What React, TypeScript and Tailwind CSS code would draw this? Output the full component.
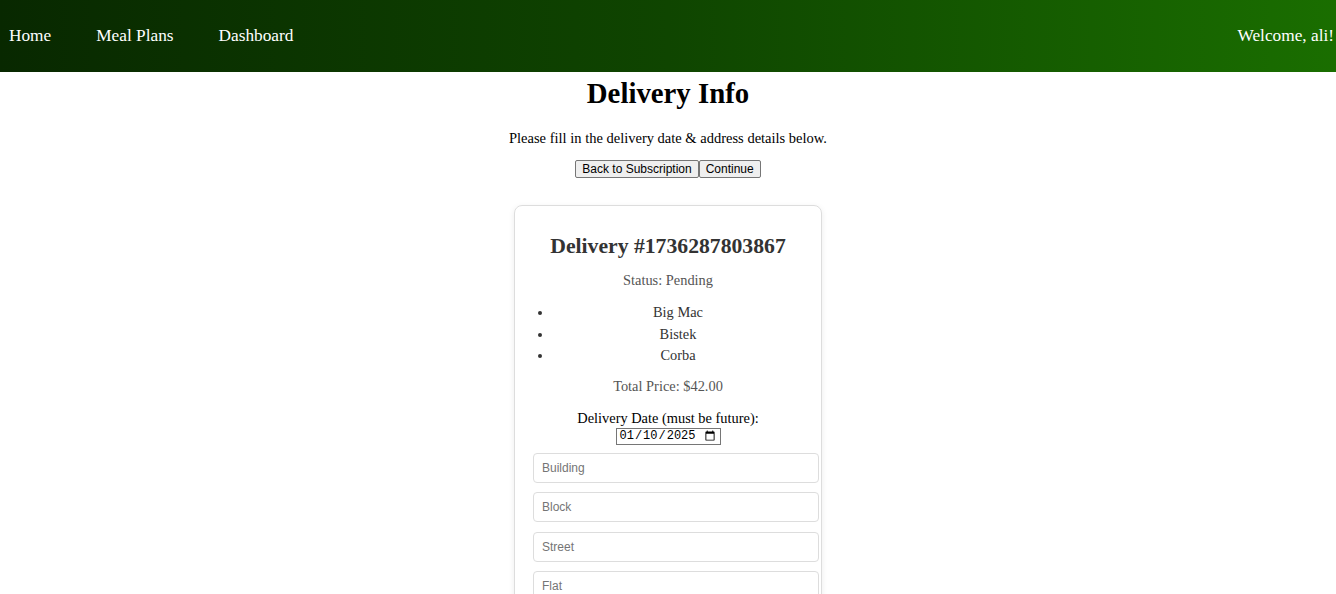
import React from "react";

export default function App() {
  const serif = { fontFamily: '"Liberation Serif", "Times New Roman", serif' };
  return (
    <div className="min-h-[594px] bg-white text-black" style={serif}>
      <nav className="h-[72px] flex items-center justify-between bg-[linear-gradient(to_right,#082800,#0f4500_50%,#1a6e00)] text-white text-[17.3px]">
        <div className="flex items-center gap-[45px] pl-[9px] pb-[1px]">
          <span>Home</span>
          <span>Meal Plans</span>
          <span>Dashboard</span>
        </div>
        <div className="pr-[2px] pb-[1px]">Welcome, ali!</div>
      </nav>

      <div className="flex flex-col items-center">
        <h1 className="mt-[4px] text-[28.8px] leading-[34px] font-bold">Delivery Info</h1>
        <p className="mt-[20px] text-[14.5px] leading-[16px]">
          Please fill in the delivery date &amp; address details below.
        </p>
        <div className="mt-[14px] flex" style={{ fontFamily: '"Liberation Sans", Arial, sans-serif' }}>
          <button className="h-[18px] px-[6px] text-[12px] leading-[14px] bg-[#efefef] border border-[#767676] rounded-[2px] text-black">
            Back to Subscription
          </button>
          <button className="h-[18px] px-[6px] text-[12px] leading-[14px] bg-[#efefef] border border-[#767676] rounded-[2px] text-black">
            Continue
          </button>
        </div>

        <div className="mt-[27px] w-[308px] border border-[#dddddd] rounded-[8px] shadow-[0_2px_6px_rgba(0,0,0,0.08)] pl-[18px] pr-[18px] pt-[27px] pb-[20px] flex flex-col items-stretch">
          <h2 className="text-center font-bold text-[21.7px] leading-[26px] text-[#333333]">
            Delivery #1736287803867
          </h2>
          <p className="mt-[12px] text-center text-[14.4px] leading-[18px] text-[#555555]">Status: Pending</p>
          <ul className="mt-[13px] list-disc pl-[20px] text-[14.4px] leading-[21.5px] text-[#333333] text-center">
            <li>Big Mac</li>
            <li>Bistek</li>
            <li>Corba</li>
          </ul>
          <p className="mt-[11px] text-center text-[14.4px] leading-[17px] text-[#555555]">Total Price: $42.00</p>
          <label className="mt-[15px] text-center text-[14.4px] leading-[17px] text-black">
            Delivery Date (must be future):
          </label>
          <div className="flex justify-center mt-[1px]">
            <input
              type="date"
              defaultValue="2025-01-10"
              className="w-[105px] h-[17px] border border-[#767676] text-[12px] leading-[15px] px-[2px] text-black"
              style={{ fontFamily: '"Liberation Mono", "Courier New", monospace' }}
            />
          </div>
          <div className="mt-[8px] flex flex-col gap-[9.5px]" style={{ fontFamily: '"Liberation Sans", Arial, sans-serif' }}>
            {["Building", "Block", "Street", "Flat"].map((p) => (
              <input
                key={p}
                placeholder={p}
                className="w-[286px] h-[30px] border border-[#dddddd] rounded-[4px] px-[8px] text-[12px] placeholder:text-[#757575]"
              />
            ))}
          </div>
        </div>
      </div>
    </div>
  );
}
